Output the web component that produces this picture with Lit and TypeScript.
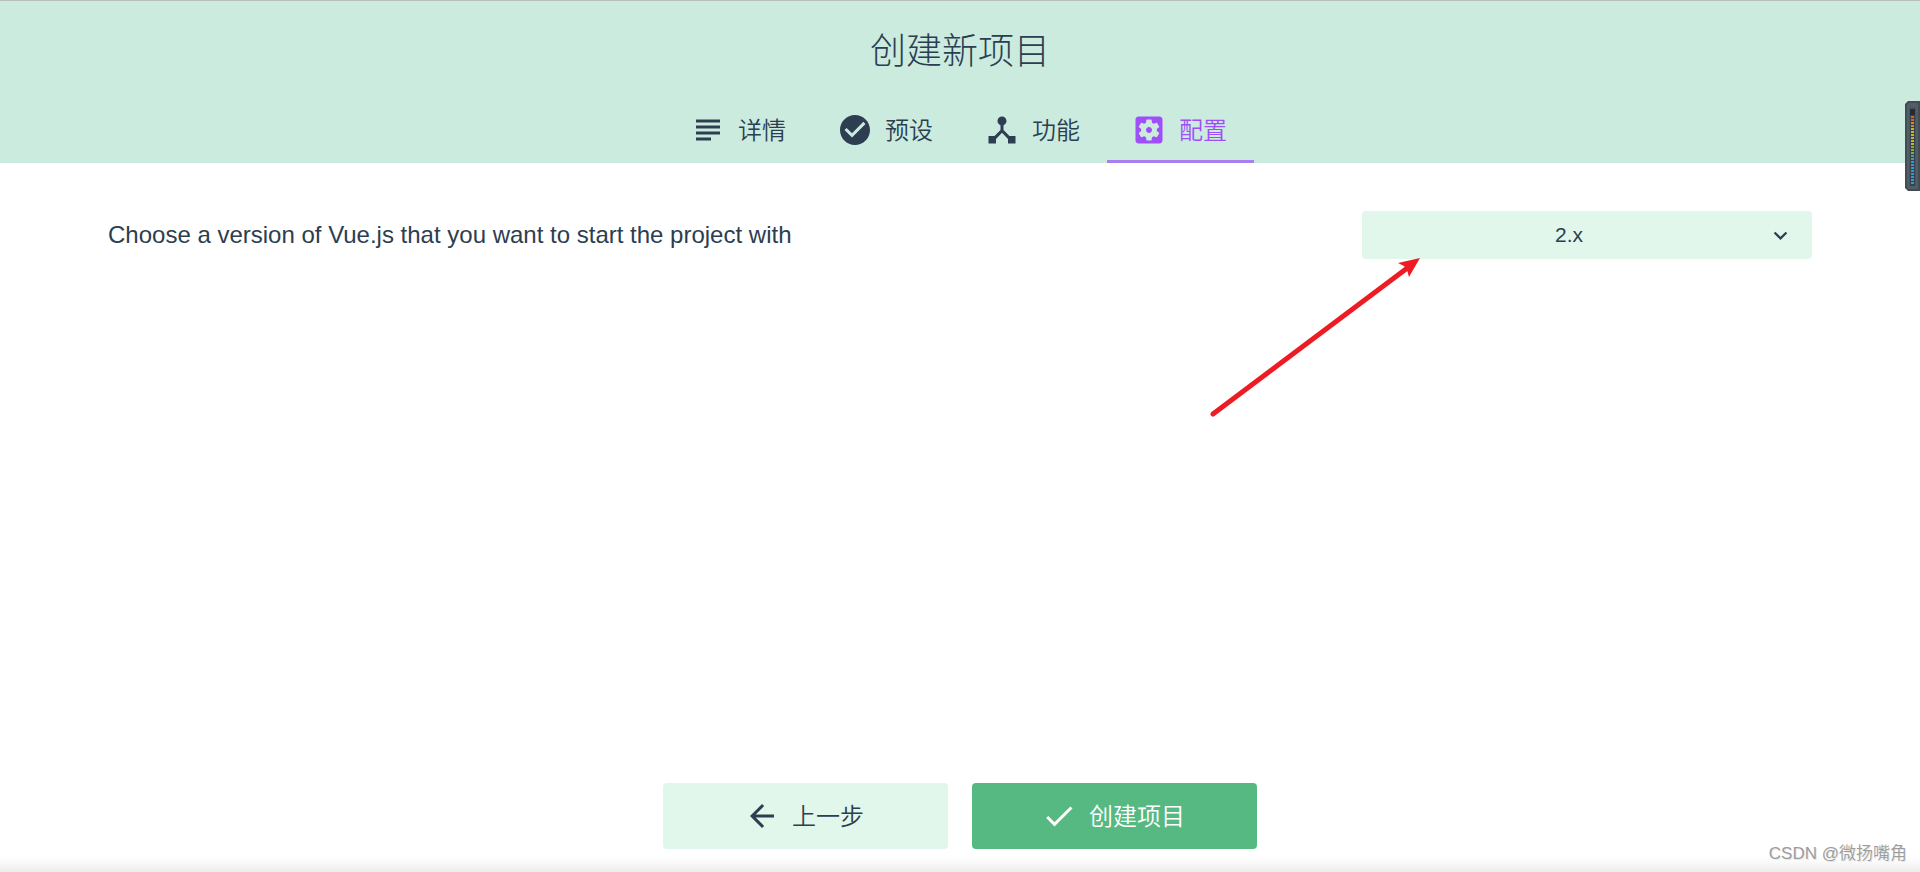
import { LitElement, html, css, svg } from "lit";
import { customElement, property, state } from "lit/decorators.js";

const ICONS: Record<string, string> = {
  subject: "M4 5h16v2H4zm0 4h16v2H4zm0 4h16v2H4zm0 4h10v2H4z",
  check_circle:
    "M12 2C6.48 2 2 6.48 2 12s4.48 10 10 10 10-4.480 10-10S17.520 2 12 2zm-2 15l-5-5 1.410-1.410L10 14.170l7.590-7.590L19 8l-9 9z",
  device_hub: "M17 16l-4-4V8.820C14.160 8.400 15 7.300 15 6c0-1.660-1.340-3-3-3S9 4.340 9 6c0 1.300.840 2.400 2 2.820V12l-4 4H3v5h5v-3.050l4-4.200 4 4.200V21h5v-5h-4z",
  settings:
    "M12 10c-1.100 0-2 .900-2 2s.900 2 2 2 2-.900 2-2-.900-2-2-2zm7-7H5c-1.110 0-2 .900-2 2v14c0 1.100.890 2 2 2h14c1.110 0 2-.900 2-2V5c0-1.100-.890-2-2-2zm-1.750 9c0 .230-.020.460-.050.680l1.480 1.160c.130.110.170.300.080.450l-1.400 2.420c-.090.150-.270.210-.430.150l-1.740-.700c-.360.280-.760.510-1.180.690l-.260 1.850c-.030.170-.180.300-.350.300h-2.800c-.170 0-.320-.130-.350-.290l-.260-1.850c-.430-.180-.820-.410-1.180-.690l-1.740.700c-.160.060-.340 0-.430-.150l-1.400-2.420c-.090-.150-.050-.340.080-.450l1.480-1.160c-.030-.230-.050-.460-.050-.690 0-.230.020-.460.050-.680l-1.480-1.160c-.130-.110-.170-.300-.080-.450l1.400-2.420c.090-.150.270-.210.430-.150l1.740.700c.360-.280.760-.510 1.180-.690l.260-1.850c.030-.170.180-.300.350-.300h2.800c.170 0 .320.130.350.290l.260 1.850c.430.180.820.410 1.180.690l1.740-.700c.160-.060.340 0 .430.150l1.400 2.420c.090.150.050.340-.080.450l-1.480 1.160c.030.230.050.460.050.690z",
  arrow_back: "M20 11H7.830l5.590-5.590L12 4l-8 8 8 8 1.410-1.410L7.830 13H20v-2z",
  check: "M9 16.170L4.830 12l-1.420 1.410L9 19 21 7l-1.410-1.410z",
  expand_more: "M16.590 8.590L12 13.170 7.410 8.590 6 10l6 6 6-6z",
};

@customElement("ui-icon")
class UiIcon extends LitElement {
  @property() name = "";

  static styles = css`
    :host {
      display: block;
      flex: none;
      width: 36px;
      height: 36px;
    }
    svg {
      display: block;
      width: 100%;
      height: 100%;
      fill: currentColor;
    }
  `;

  render() {
    return html`<svg viewBox="0 0 24 24" aria-hidden="true">
      <path d=${ICONS[this.name] ?? ""}></path>
    </svg>`;
  }
}

@customElement("level-meter")
class LevelMeter extends LitElement {
  static styles = css`
    :host {
      display: block;
    }
    svg {
      display: block;
    }
  `;

  private color(i: number) {
    if (i < 2) return "#d9601f";
    if (i < 4) return "#cf8a20";
    if (i < 10) return "#c9b428";
    if (i < 13) return "#86ac3c";
    if (i < 15) return "#49a08a";
    return "#2b9bd2";
  }

  render() {
    return html`<svg width="15" height="90" viewBox="0 0 15 90" aria-hidden="true">
      <path d="M3 0H15V90H3L0 87V3Z" fill="#434c52"></path>
      <path d="M4 2H13V88H4L2 86V4Z" fill="#525e65"></path>
      <rect x="4" y="6" width="7" height="79" fill="#4a555c"></rect>
      <rect x="5" y="8" width="5" height="77" fill="#38424c"></rect>
      <rect x="5" y="8" width="5" height="6" fill="#272b38"></rect>
      ${Array.from(
        { length: 23 },
        (_, i) => svg`<rect x="6" y=${15 + i * 3} width="3" height="2" fill=${this.color(i)}></rect>`
      )}
    </svg>`;
  }
}

@customElement("app-root")
class AppRoot extends LitElement {
  @state() private active = "config";
  @state() private version = "2.x";

  private tabs = [
    { id: "details", icon: "subject", label: "详情" },
    { id: "presets", icon: "check_circle", label: "预设" },
    { id: "features", icon: "device_hub", label: "功能" },
    { id: "config", icon: "settings", label: "配置" },
  ];

  static styles = css`
    :host {
      display: flex;
      flex-direction: column;
      position: relative;
      min-height: 100vh;
      box-sizing: border-box;
      background: #fff;
      color: #2c3e50;
      font: 24px/36px "Liberation Sans", "Noto Sans CJK SC", sans-serif;
    }
    button,
    select {
      font: inherit;
      color: inherit;
      border: 0;
      margin: 0;
      cursor: pointer;
    }
    .header {
      display: flex;
      flex-direction: column;
      align-items: center;
      border-top: 1px solid #b9bfbc;
      background: #cbebdf;
    }
    .title {
      margin: 0;
      padding: 20px 24px 22px;
      font-size: 36px;
      line-height: 54px;
      font-weight: 300;
      font-family: "Noto Sans CJK SC", sans-serif;
    }
    .tabs {
      display: flex;
    }
    .tab {
      display: flex;
      align-items: center;
      gap: 12px;
      height: 66px;
      padding: 0 27px 0 24px;
      background: none;
      font-weight: 350;
    }
    .tab.selected {
      color: #a04efa;
      box-shadow: inset 0 -3px #a97ff0;
    }
    .content {
      flex: 1;
      padding: 48px 108px;
    }
    .prompt {
      display: flex;
      align-items: center;
      justify-content: space-between;
      gap: 24px;
    }
    .field {
      position: relative;
      display: grid;
      align-items: center;
      width: 450px;
    }
    .field > select,
    .field > ui-icon {
      grid-area: 1 / 1;
    }
    .select {
      appearance: none;
      height: 48px;
      padding: 0 54px 0 18px;
      border-radius: 4px;
      background: #e1f7eb;
      font-size: 21px;
      text-align: center;
      text-align-last: center;
    }
    .chevron {
      justify-self: end;
      width: 27px;
      height: 27px;
      margin-right: 18px;
      pointer-events: none;
    }
    .pointer {
      position: absolute;
      top: 46px;
      left: -152px;
      pointer-events: none;
    }
    .actions {
      display: flex;
      justify-content: center;
      gap: 24px;
      padding-bottom: 23px;
      background: linear-gradient(to top, #ededed, #fafafa 10px, #fff 18px);
    }
    .action {
      display: flex;
      align-items: center;
      justify-content: center;
      gap: 12px;
      width: 285px;
      height: 66px;
      padding: 0 27px 0 24px;
      border-radius: 4px;
      background: #e1f7eb;
      font-weight: 350;
    }
    .action.primary {
      background: #57b982;
      color: #fff;
    }
    .tab span,
    .action span {
      padding-top: 2px;
    }
    .meter {
      position: absolute;
      top: 101px;
      right: 0;
    }
    .credit {
      position: absolute;
      right: 13px;
      bottom: 6px;
      color: #9c9c9c;
      font-size: 17px;
      font-weight: 350;
      line-height: 24px;
      text-shadow: 1px 1px #8883;
    }
  `;

  render() {
    return html`
      <header class="header">
        <h1 class="title">创建新项目</h1>
        <nav class="tabs" role="tablist">
          ${this.tabs.map(
            (t) => html`<button
              class="tab ${t.id === this.active ? "selected" : ""}"
              role="tab"
              aria-selected=${t.id === this.active}
              @click=${() => (this.active = t.id)}
            >
              <ui-icon name=${t.icon}></ui-icon><span>${t.label}</span>
            </button>`
          )}
        </nav>
      </header>
      <main class="content">
        <div class="prompt">
          <label for="version">Choose a version of Vue.js that you want to start the project with</label>
          <div class="field">
            <select
              id="version"
              class="select"
              .value=${this.version}
              @change=${(e: Event) => (this.version = (e.target as HTMLSelectElement).value)}
            >
              <option>2.x</option>
              <option>3.x</option>
            </select>
            <ui-icon class="chevron" name="expand_more"></ui-icon>
            <svg class="pointer" width="212" height="162" viewBox="0 0 212 162" aria-hidden="true">
              <path d="M3 157L196 12" stroke="#ed1c24" stroke-width="5" stroke-linecap="round"></path>
              <path d="M210 1L188 6L194 9L197 13L199 20Z" fill="#ed1c24"></path>
            </svg>
          </div>
        </div>
      </main>
      <footer class="actions">
        <button class="action"><ui-icon name="arrow_back"></ui-icon><span>上一步</span></button>
        <button class="action primary"><ui-icon name="check"></ui-icon><span>创建项目</span></button>
      </footer>
      <level-meter class="meter"></level-meter>
      <div class="credit">CSDN @微扬嘴角</div>
    `;
  }
}
